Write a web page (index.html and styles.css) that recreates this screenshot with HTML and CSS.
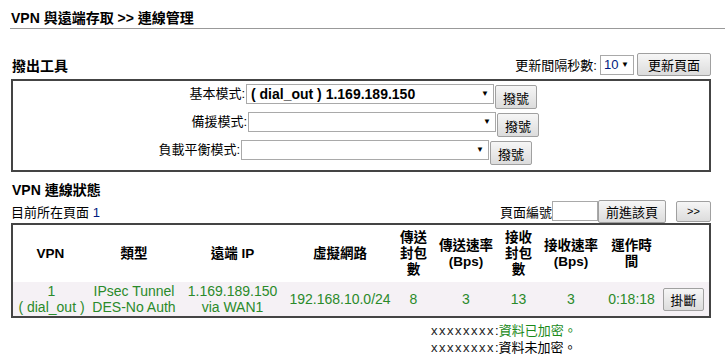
FILE: index.html
```html
<!DOCTYPE html>
<html lang="zh-Hant">
<head>
    <meta charset="UTF-8">
    <title>連線管理</title>
    <link rel="stylesheet" href="styles.css">
</head>
<body>

<div class="title">VPN 與遠端存取 &gt;&gt; 連線管理</div>

<div class="bar bar-tools">
    <span class="bar-title">撥出工具</span>
    <span class="refresh">
        更新間隔秒數:
        <span class="select small">10<span class="arrow">&#9660;</span></span>
        <button class="btn">更新頁面</button>
    </span>
</div>

<div class="box dial">
    <div class="dial-row r1">
        <label>基本模式:</label>
        <span class="select wide bold">( dial_out ) 1.169.189.150<span class="arrow">&#9660;</span></span>
        <button class="btn">撥號</button>
    </div>
    <div class="dial-row r2">
        <label>備援模式:</label>
        <span class="select wide"><span class="arrow">&#9660;</span></span>
        <button class="btn">撥號</button>
    </div>
    <div class="dial-row r3">
        <label>負載平衡模式:</label>
        <span class="select wide"><span class="arrow">&#9660;</span></span>
        <button class="btn">撥號</button>
    </div>
</div>

<div class="status-title">VPN 連線狀態</div>
<div class="bar bar-page">
    <span>目前所在頁面 <span class="num">1</span></span>
    <span class="goto">
        頁面編號<span class="input"></span><button class="btn">前進該頁</button>
        <button class="btn next">&gt;&gt;</button>
    </span>
</div>

<div class="box">
    <table class="conn">
        <colgroup>
            <col style="width:75px">
            <col style="width:92px">
            <col style="width:105px">
            <col style="width:110px">
            <col style="width:37px">
            <col style="width:68px">
            <col style="width:37px">
            <col style="width:68px">
            <col style="width:53px">
            <col>
        </colgroup>
        <tr class="head">
            <th>VPN</th>
            <th>類型</th>
            <th>遠端 IP</th>
            <th>虛擬網路</th>
            <th class="narrow">傳送封包數</th>
            <th>傳送速率 (Bps)</th>
            <th class="narrow">接收封包數</th>
            <th>接收速率 (Bps)</th>
            <th class="narrow">運作時間</th>
            <th></th>
        </tr>
        <tr class="data">
            <td>1<br>( dial_out )</td>
            <td>IPsec Tunnel<br>DES-No Auth</td>
            <td>1.169.189.150<br>via WAN1</td>
            <td>192.168.10.0/24</td>
            <td>8</td>
            <td>3</td>
            <td>13</td>
            <td>3</td>
            <td>0:18:18</td>
            <td><button class="btn">掛斷</button></td>
        </tr>
    </table>
</div>

<div class="legend">
    <div><span class="xs">xxxxxxxx</span>:<span class="green">資料已加密。</span></div>
    <div><span class="xs">xxxxxxxx</span>:資料未加密。</div>
</div>

</body>
</html>
```

FILE: styles.css
```css
body {
    margin: 0;
    padding: 0 0 0 10px;
    font-family: "Liberation Sans", "Noto Sans CJK TC", sans-serif;
    font-size: 13px;
    color: #000;
    background: #fff;
}
.title {
    font-weight: bold;
    font-size: 14px;
    height: 21px;
    padding: 7px 0 0 1px;
    border-bottom: 1px solid #999;
}
.bar {
    width: 700px;
    margin-left: 1px;
    display: flex;
    justify-content: space-between;
    align-items: flex-end;
}
.bar-tools {
    margin-top: 24px;
    height: 26px;
}
.bar-title {
    font-weight: bold;
    font-size: 14px;
    padding: 0 0 4px 1px;
}
.refresh {
    display: flex;
    align-items: center;
    gap: 3px;
    padding-bottom: 3px;
}
.select {
    position: relative;
    display: inline-block;
    box-sizing: border-box;
    height: 20px;
    line-height: 18px;
    border: 1px solid #a9a9a9;
    background: #fff;
    padding: 0 14px 0 4px;
    font-size: 13px;
    color: #000;
}
.select.small {
    width: 34px;
    padding-left: 3px;
    color: #001a80;
}
.select.wide {
    width: 248px;
}
.select.bold {
    font-weight: bold;
    font-size: 14px;
}
.arrow {
    position: absolute;
    right: 4px;
    top: 0;
    font-size: 8px;
    font-weight: normal;
    color: #000;
}
.btn {
    font-family: "Liberation Sans", "Noto Sans CJK TC", sans-serif;
    font-size: 13px;
    height: 23px;
    padding: 0 7px;
    border: 1px solid #a0a0a0;
    border-radius: 2px;
    background: linear-gradient(#f6f6f6, #dcdcdc);
    color: #000;
}
.refresh .btn {
    padding: 0 10px;
}
.box {
    width: 696px;
    margin-left: 1px;
    border: 2px solid #444;
}
.dial {
    padding: 1px 0 4px;
}
.dial-row {
    display: flex;
    align-items: flex-start;
    height: 28px;
}
.dial-row label {
    text-align: right;
    line-height: 20px;
    padding-top: 2px;
}
.r1 label {
    width: 232px;
}
.r2 label {
    width: 234px;
}
.r3 label {
    width: 227px;
}
.dial-row .select {
    margin: 2px 0 0 1px;
}
.dial-row .btn {
    margin: 3px 0 0 1px;
    height: 24px;
}
.status-title {
    font-weight: bold;
    font-size: 14px;
    margin: 7px 0 0 2px;
}
.bar-page {
    height: 24px;
    align-items: center;
}
.num {
    color: #001a80;
}
.goto {
    display: flex;
    align-items: center;
}
.input {
    display: inline-block;
    width: 44px;
    height: 18px;
    border: 1px solid #a9a9a9;
}
.goto .btn {
    height: 23px;
}
.goto .next {
    margin-left: 10px;
    height: 21px;
    width: 35px;
    font-size: 11px;
}
.conn {
    width: 100%;
    border-collapse: collapse;
    table-layout: fixed;
}
.conn th {
    font-weight: bold;
    font-size: 13.5px;
    padding: 3px 2px;
    height: 51px;
    line-height: 16px;
}
.conn th.narrow {
    padding: 3px 5px;
}
.conn .data td {
    background: #f5f1f5;
    color: #2a8a2a;
    text-align: center;
    font-size: 14px;
    line-height: 16px;
    padding: 1px 0;
}
.conn .data td:first-child {
    padding-left: 2px;
}
.conn .data .btn {
    height: 23px;
    width: 41px;
    padding: 0;
}
.legend {
    margin: 4px 0 0 421px;
    line-height: 17px;
}
.xs {
    letter-spacing: 1.5px;
    color: #222;
}
.green {
    color: #1a8a1a;
}
```
